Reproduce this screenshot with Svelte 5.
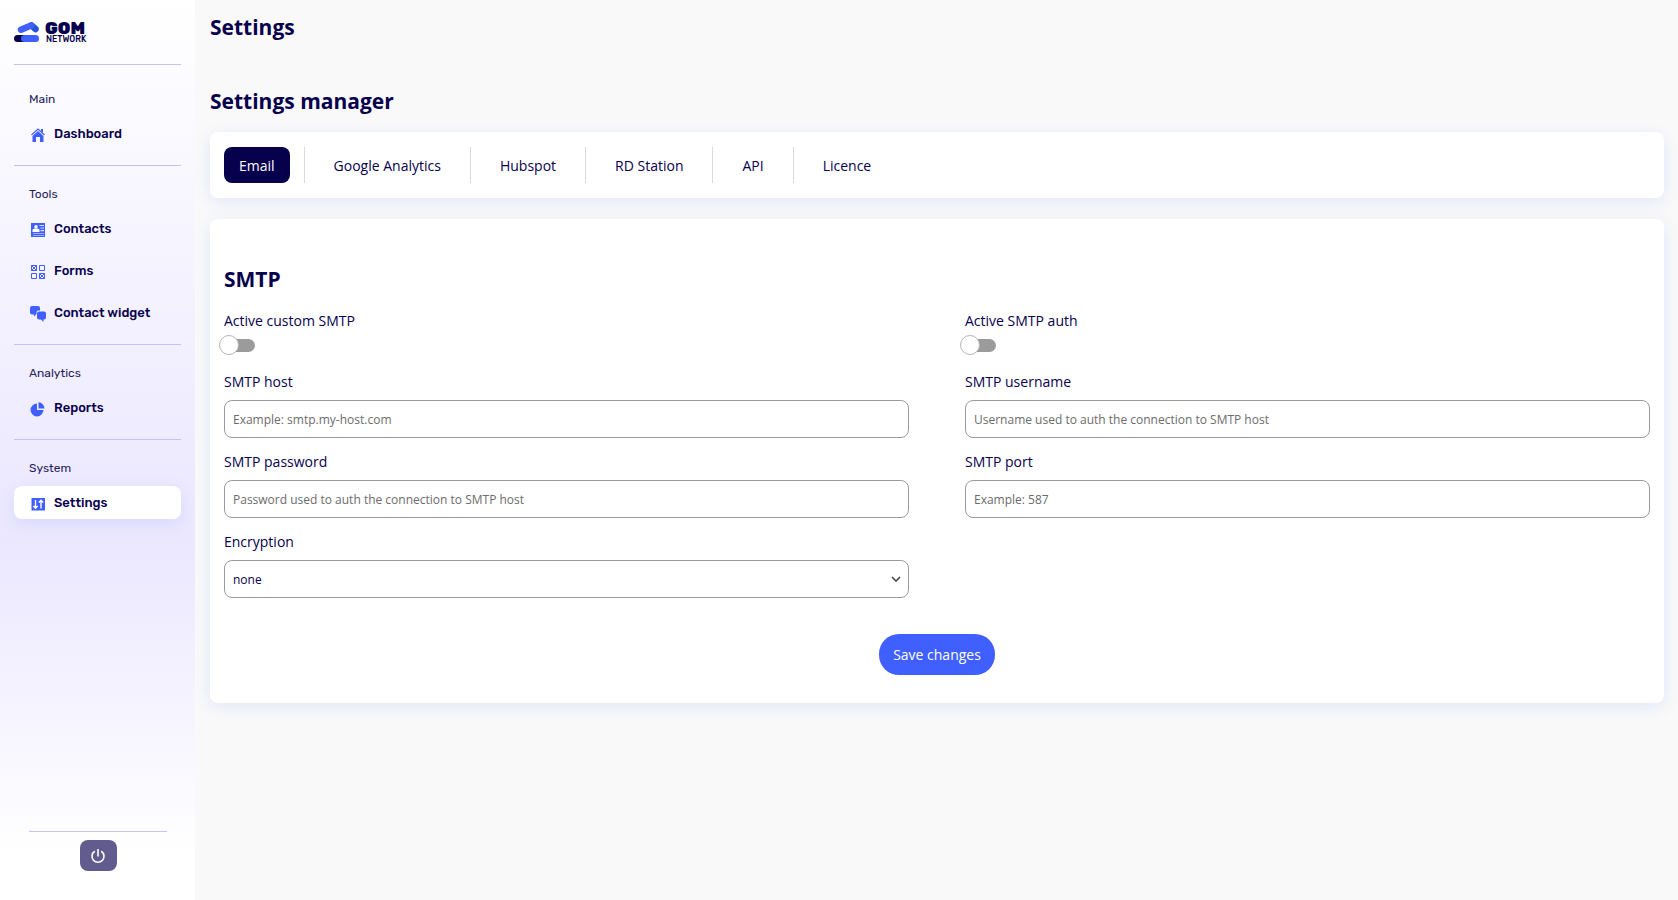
<script>
  const groups = [
    { title: 'Main', items: [{ label: 'Dashboard', icon: 'home' }] },
    {
      title: 'Tools',
      items: [
        { label: 'Contacts', icon: 'contacts' },
        { label: 'Forms', icon: 'forms' },
        { label: 'Contact widget', icon: 'chat' },
      ],
    },
    { title: 'Analytics', items: [{ label: 'Reports', icon: 'pie' }] },
    { title: 'System', items: [{ label: 'Settings', icon: 'settings' }] },
  ];

  const tabs = ['Email', 'Google Analytics', 'Hubspot', 'RD Station', 'API', 'Licence'];

  let currentPage = $state('Settings');
  let currentTab = $state('Email');
  let smtp = $state({
    active: false,
    auth: false,
    host: '',
    username: '',
    password: '',
    port: '',
    encryption: 'none',
  });

  function save(event) {
    event.preventDefault();
    console.log('SMTP settings', $state.snapshot(smtp));
  }
</script>

<div class="layout">
  <aside class="sidebar">
    <a class="logo" href="#home" aria-label="GOM Network">
      <svg width="80" height="30" viewBox="0 -4 80 30">
        <path d="M17.500 5.500 L21.500 9" fill="none" stroke="#2353d8" stroke-width="6.500" stroke-linecap="round" />
        <path d="M7 9.700 L17 5.500" fill="none" stroke="#405fff" stroke-width="6.500" stroke-linecap="round" />
        <path d="M11.500 13.500 L17 9.500 L20 13.500 Z" fill="#fff" />
        <rect x="0" y="15" width="18" height="7" rx="3.500" fill="#07004d" />
        <rect x="7" y="15" width="18" height="7" rx="3.500" fill="#405fff" />
        <text x="31" y="14" font-size="17" font-weight="900">GOM</text>
        <text x="32" y="22" font-size="8.500" font-weight="500">NETWORK</text>
      </svg>
    </a>

    <nav>
      {#each groups as group}
        <section>
          <h2>{group.title}</h2>
          <ul>
            {#each group.items as item}
              <li>
                <a
                  href={'#' + item.icon}
                  class:active={currentPage === item.label}
                  onclick={() => (currentPage = item.label)}
                >
                  <svg width="16" height="16" viewBox="0 0 16 16" fill="#405fff">
                    {#if item.icon === 'home'}
                      <path d="M1.500 8 L8 2 L14.500 8" fill="none" stroke="#405fff" stroke-width="1.200" />
                      <path d="M11 2h2v4l-2-2z" />
                      <path d="M2.500 9 L8 4 L13.500 9 V15 H10 V10 H6 V15 H2.500 Z" />
                    {:else if item.icon === 'contacts'}
                      <path d="M1 1h14v14H1z" />
                      <g fill="#fff">
                        <circle cx="6" cy="4.700" r="1.700" />
                        <path d="M2.500 10V8q0-1.200 2-1.500h3q2 .3 2 1.500v2z" />
                        <path d="M9.500 3H14v1H9.500zM10.500 5.500H14v1h-3.500zM10.500 8H14v1.200h-3.500z" opacity=".8" />
                        <path d="M3 11.200h11v.8H3zM3 13h11v.8H3z" opacity=".6" />
                      </g>
                    {:else if item.icon === 'forms'}
                      <path
                        d="M1.500 1.500h5v5h-5zM9.500 1.500h5v5h-5zM1.500 9.500h5v5h-5zM9.500 9.500h5v5h-5zM1.500 1.500l5 5M6.500 1.500l-5 5M9.500 9.500l5 5M14.500 9.500l-5 5"
                        fill="none"
                        stroke="#405fff"
                      />
                    {:else if item.icon === 'chat'}
                      <path d="M2 0h6q2 0 2 2v2.500H8.500Q6.500 4.500 6.500 6.500V8L4 10.500V8.500H2Q0 8.500 0 6.500V2Q0 0 2 0z" />
                      <path d="M9 5.500h5q2 0 2 2v4q0 2-2 2h-.500V16L11 13.500H9q-2 0-2-2v-4q0-2 2-2z" />
                    {:else if item.icon === 'pie'}
                      <path d="M7 2.500V9h6.500A6.500 6.500 0 1 1 7 2.500z" />
                      <path d="M8.500 1.200A6.500 6.500 0 0 1 14.500 7.500h-6z" />
                    {:else}
                      <path d="M1.500 2H15v12.500H1.500z" />
                      <path
                        d="M5.500 4v8M3.300 10l2.200 2.300L7.700 10M11 12.500v-8M8.800 6.500L11 4.200l2.200 2.300"
                        fill="none"
                        stroke="#fff"
                        stroke-width="1.400"
                      />
                    {/if}
                  </svg>
                  {item.label}
                </a>
              </li>
            {/each}
          </ul>
        </section>
      {/each}
    </nav>

    <div class="sidebar-footer">
      <button type="button" aria-label="Log out">
        <svg width="16" height="16" viewBox="0 0 16 16" fill="none" stroke="#fff" stroke-width="1.600">
          <path d="M8 1v7.500" />
          <path d="M4.800 3.200a6 6 0 1 0 6.400 0" />
        </svg>
      </button>
    </div>
  </aside>

  <main>
    <h1>Settings</h1>
    <h1>Settings manager</h1>

    <ul class="card tabs">
      {#each tabs as tab}
        <li>
          <button type="button" class:active={currentTab === tab} onclick={() => (currentTab = tab)}>{tab}</button>
        </li>
      {/each}
    </ul>

    <form class="card" onsubmit={save}>
      <h1>SMTP</h1>
      <div class="fields">
        <div class="field">
          <label for="active">Active custom SMTP</label>
          <input id="active" class="switch" type="checkbox" bind:checked={smtp.active} />
        </div>
        <div class="field">
          <label for="auth">Active SMTP auth</label>
          <input id="auth" class="switch" type="checkbox" bind:checked={smtp.auth} />
        </div>
        <div class="field">
          <label for="host">SMTP host</label>
          <input id="host" class="control" type="text" placeholder="Example: smtp.my-host.com" bind:value={smtp.host} />
        </div>
        <div class="field">
          <label for="username">SMTP username</label>
          <input id="username" class="control" type="text" placeholder="Username used to auth the connection to SMTP host" bind:value={smtp.username} />
        </div>
        <div class="field">
          <label for="password">SMTP password</label>
          <input id="password" class="control" type="password" placeholder="Password used to auth the connection to SMTP host" bind:value={smtp.password} />
        </div>
        <div class="field">
          <label for="port">SMTP port</label>
          <input id="port" class="control" type="text" placeholder="Example: 587" bind:value={smtp.port} />
        </div>
        <div class="field">
          <label for="encryption">Encryption</label>
          <div class="select">
            <select id="encryption" class="control" bind:value={smtp.encryption}>
              <option value="none">none</option>
              <option value="ssl">ssl</option>
              <option value="tls">tls</option>
            </select>
            <svg width="10" height="6" viewBox="0 0 10 6" fill="none" stroke="#444" stroke-width="1.600">
              <path d="M1 1l4 4 4-4" />
            </svg>
          </div>
        </div>
      </div>
      <button class="save" type="submit">Save changes</button>
    </form>
  </main>
</div>

<style>
  :global(body) {
    margin: 0;
    background: #f9f9f9;
  }
  .layout {
    display: flex;
    min-height: 100vh;
    color: #07004d;
    font-family: "Segoe UI", "Open Sans", "Noto Sans", sans-serif;
    font-size: 14px;
  }
  ul {
    list-style: none;
    margin: 0;
    padding: 0;
  }
  button,
  input,
  select {
    font: inherit;
    color: inherit;
  }

  /* sidebar */
  .sidebar {
    box-sizing: border-box;
    flex: none;
    width: 195px;
    padding: 16px 14px 29px;
    display: flex;
    flex-direction: column;
    background: linear-gradient(#fff 0%, #ebe7ff 60%, #fff 95%);
    font-family: Rubik, Roboto, sans-serif;
  }
  .logo {
    height: 48px;
  }
  .logo svg {
    display: block;
    overflow: visible;
  }
  .logo text {
    fill: #07004d;
    font-family: Rubik, Inter, sans-serif;
  }
  section {
    border-top: 1px solid #c8bfff;
    padding: 19px 0 15px;
  }
  section:first-child {
    padding-top: 25px;
  }
  section h2 {
    margin: 0 0 9px;
    padding-left: 15px;
    font-size: 12px;
    font-weight: 400;
    line-height: 18px;
    color: #241c5c;
  }
  section ul {
    display: flex;
    flex-direction: column;
    gap: 9px;
  }
  section a {
    display: flex;
    align-items: center;
    gap: 8px;
    height: 33px;
    padding-left: 16px;
    border-radius: 8px;
    color: #07004d;
    font-size: 13px;
    font-weight: 500;
    text-decoration: none;
  }
  section a svg {
    margin-top: 2px;
  }
  section a.active {
    background: #fff;
    box-shadow: 0 4px 16px rgba(64, 95, 255, 0.12);
  }
  .sidebar-footer {
    margin: auto 14px 0 15px;
    padding-top: 8px;
    border-top: 1px solid #c8bfff;
    text-align: center;
  }
  .sidebar-footer button {
    display: inline-flex;
    align-items: center;
    justify-content: center;
    width: 37px;
    height: 31px;
    padding: 0;
    border: 0;
    border-radius: 8px;
    background: #615b8e;
    vertical-align: top;
    cursor: pointer;
  }

  /* content */
  main {
    flex: 1;
    min-width: 0;
    padding: 12px 14px 0 15px;
  }
  h1 {
    margin: 0 0 44px;
    font-size: 21px;
    line-height: 30px;
    font-weight: 700;
  }
  h1 + h1 {
    margin-bottom: 16px;
  }
  .card {
    background: #fff;
    border-radius: 8px;
    box-shadow: 0 4px 16px rgba(64, 95, 255, 0.12);
  }
  .tabs {
    display: flex;
    padding: 15px 0;
    margin-bottom: 21px;
  }
  .tabs li {
    padding: 0 14px;
    border-right: 1px solid #d9d9d9;
  }
  .tabs li:last-child {
    border-right: 0;
  }
  .tabs button {
    height: 36px;
    padding: 0 15px;
    border: 0;
    border-radius: 8px;
    background: none;
    cursor: pointer;
  }
  .tabs button.active {
    background: #07004d;
    color: #fff;
  }
  form {
    padding: 45px 14px 28px;
  }
  form h1 {
    margin-bottom: 17px;
  }
  .fields {
    display: grid;
    grid-template-columns: 1fr 1fr;
    column-gap: 56px;
    row-gap: 14px;
  }
  label {
    display: block;
    line-height: 20px;
  }
  .switch {
    appearance: none;
    display: block;
    position: relative;
    width: 31px;
    height: 13px;
    margin: 8px 0 6px;
    border-radius: 8px;
    background: #9b9b9b;
    cursor: pointer;
  }
  .switch::before {
    content: "";
    position: absolute;
    box-sizing: border-box;
    top: -4px;
    left: -5px;
    width: 20px;
    height: 20px;
    border: 1px solid #b5b5b5;
    border-radius: 50%;
    background: #fff;
  }
  .switch:checked {
    background: #405fff;
  }
  .switch:checked::before {
    left: 16px;
  }
  .control {
    box-sizing: border-box;
    width: 100%;
    height: 38px;
    margin-top: 8px;
    padding: 0 8px;
    border: 1px solid #9b9b9b;
    border-radius: 8px;
    background: #fff;
    font-size: 12px;
    display: block;
  }
  .control::placeholder {
    color: #6c6c6c;
    opacity: 1;
  }
  .select {
    position: relative;
  }
  .select select {
    appearance: none;
  }
  .select svg {
    position: absolute;
    right: 8px;
    top: 16px;
    pointer-events: none;
  }
  .save {
    display: block;
    height: 41px;
    margin: 36px auto 0;
    padding: 0 14px;
    border: 0;
    border-radius: 20px;
    background: #405fff;
    color: #fff;
    cursor: pointer;
  }
</style>
